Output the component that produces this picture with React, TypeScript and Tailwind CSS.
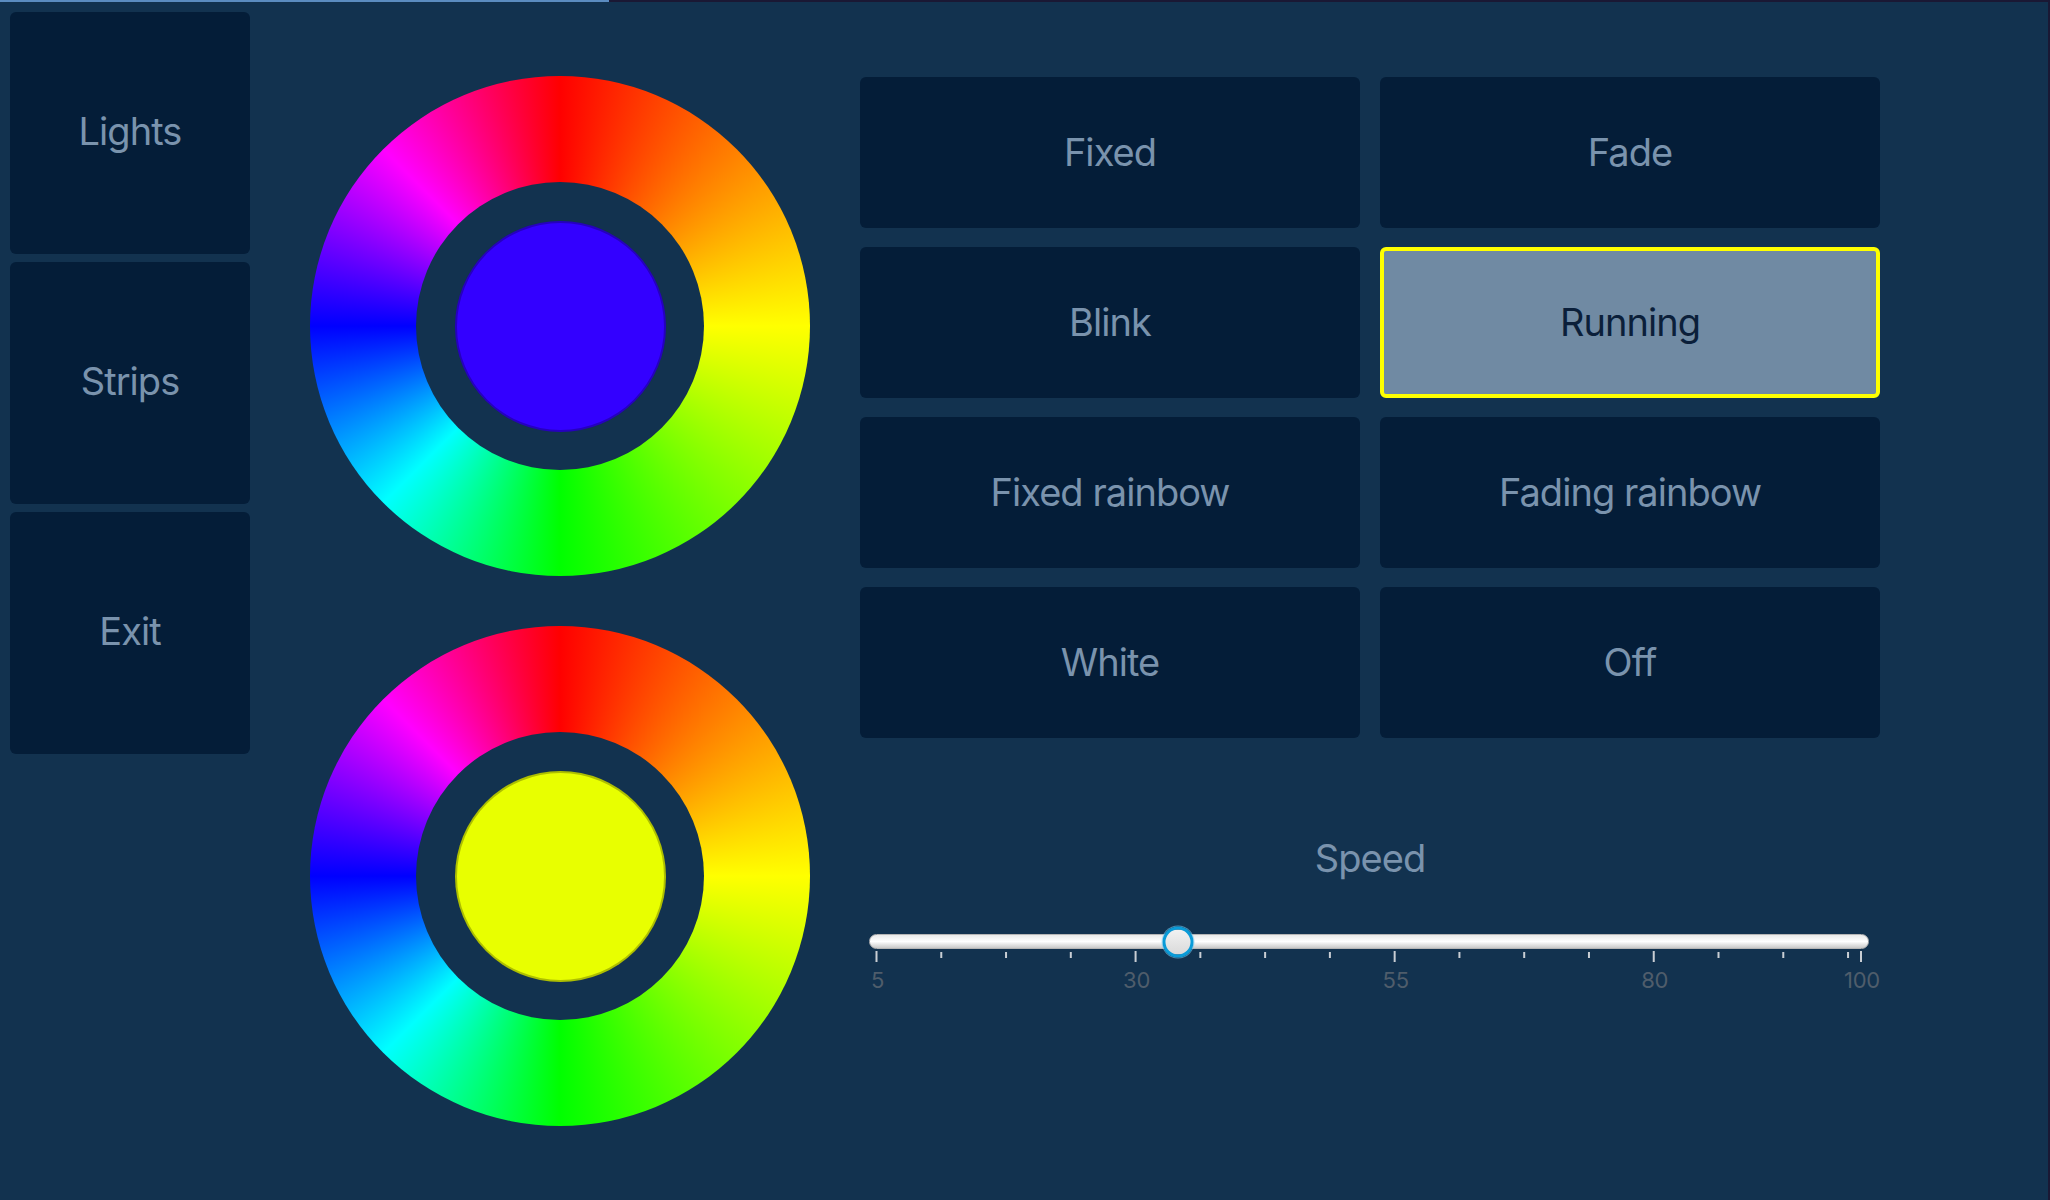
const sideItems = ["Lights", "Strips", "Exit"];

const modes = [
  "Fixed",
  "Fade",
  "Blink",
  "Running",
  "Fixed rainbow",
  "Fading rainbow",
  "White",
  "Off",
];

const ColorWheel = ({ swatch }: { swatch: string }) => {
  return (
    <div className="w-[500px] h-[500px] rounded-full bg-[conic-gradient(#ff0000_0deg,#ff8000_45deg,#ffff00_90deg,#80ff00_135deg,#00ff00_180deg,#00ffff_225deg,#0000ff_270deg,#ff00ff_315deg,#ff0000_360deg)] flex items-center justify-center">
      <div className="w-[288px] h-[288px] rounded-full bg-[#12324f] flex items-center justify-center">
        <div className={`w-[211px] h-[211px] rounded-full border-2 border-black/25 ${swatch}`} />
      </div>
    </div>
  );
};

// slider scale: 5..100, ticks every 6.25
const minV = 5;
const maxV = 100;
const trackW = 1000;
const inset = 7.5;
const span = trackW - inset * 2 - 0.5;
const xOf = (v: number) => inset + ((v - minV) / (maxV - minV)) * span;

const ticks = [
  ...Array.from({ length: 16 }, (_, i) => ({ v: minV + i * 6.25, major: i % 4 === 0 })),
  { v: 100, major: true },
];
const labels = [5, 30, 55, 80, 100];

const SpeedSlider = ({ value }: { value: number }) => {
  return (
    <div className="w-[1000px] ml-[9px]">
      <div className="relative h-[15px] rounded-full border border-[#b5b5b5] bg-linear-to-b from-[#e9e9e9] via-white to-[#c9c9c9]">
        <div
          className="absolute top-1/2 -translate-y-1/2 -translate-x-1/2 w-[31px] h-[31px] rounded-full border-[3px] border-[#0a9bd8] bg-linear-to-b from-[#f2f2f2] to-[#dadada] shadow-[0_0_0_1px_rgba(120,200,240,0.6)]"
          style={{ left: xOf(value) }}
        />
      </div>
      <svg width={trackW} height={16} className="block">
        {ticks.map((t) => (
          <rect
            key={t.v}
            x={xOf(t.v) - 1}
            y={t.major ? 2 : 3}
            width={2}
            height={t.major ? 11 : 6}
            fill="#c9ced4"
          />
        ))}
      </svg>
      <div className="relative h-[26px] mt-[2px]">
        {labels.map((l) => (
          <span
            key={l}
            className="absolute top-0 -translate-x-1/2 text-[22px] leading-[26px] tracking-[-0.01em] text-[#4f5d6b]"
            style={{ left: xOf(l) + 1 }}
          >
            {l}
          </span>
        ))}
      </div>
    </div>
  );
};

export default function App() {
  return (
    <div className="w-[2050px] h-[1200px] bg-[#12324f] border-r-2 border-[#1a1834] overflow-hidden font-['Inter','Noto_Sans',sans-serif]">
      <div className="flex h-[2px]">
        <div className="w-[609px] bg-[#5b8cc0]" />
        <div className="flex-1 bg-[#1a1834]" />
      </div>

      <div className="flex pl-[10px]">
        <div className="flex flex-col gap-[8px] w-[240px] mt-[10px]">
          {sideItems.map((item) => (
            <div
              key={item}
              className="h-[242px] rounded-[6px] bg-[#041d38] flex items-center justify-center text-[38px] tracking-[-0.025em] text-[#7a93ad] pb-[4px]"
            >
              {item}
            </div>
          ))}
        </div>

        <div className="flex flex-col gap-[50px] ml-[60px] mt-[74px]">
          <ColorWheel swatch="bg-[#3300ff]" />
          <ColorWheel swatch="bg-[#e8ff00]" />
        </div>

        <div className="flex flex-col ml-[50px] mt-[75px]">
          <div className="grid grid-cols-[500px_500px] gap-x-[20px] gap-y-[19px]">
            {modes.map((mode) => {
              const active = mode === "Running";
              return (
                <div
                  key={mode}
                  className={
                    active
                      ? "h-[151px] rounded-[6px] border-4 border-[#ffff00] bg-[#708aa3] flex items-center justify-center text-[38px] tracking-[-0.025em] text-[#0b1f3a]"
                      : "h-[151px] rounded-[6px] bg-[#041d38] flex items-center justify-center text-[38px] tracking-[-0.025em] text-[#7a93ad]"
                  }
                >
                  {mode}
                </div>
              );
            })}
          </div>

          <div className="mt-[97px] text-center text-[38px] leading-[46px] tracking-[-0.025em] text-[#7a93ad]">Speed</div>

          <div className="mt-[53px]">
            <SpeedSlider value={34} />
          </div>
        </div>
      </div>
    </div>
  );
}
